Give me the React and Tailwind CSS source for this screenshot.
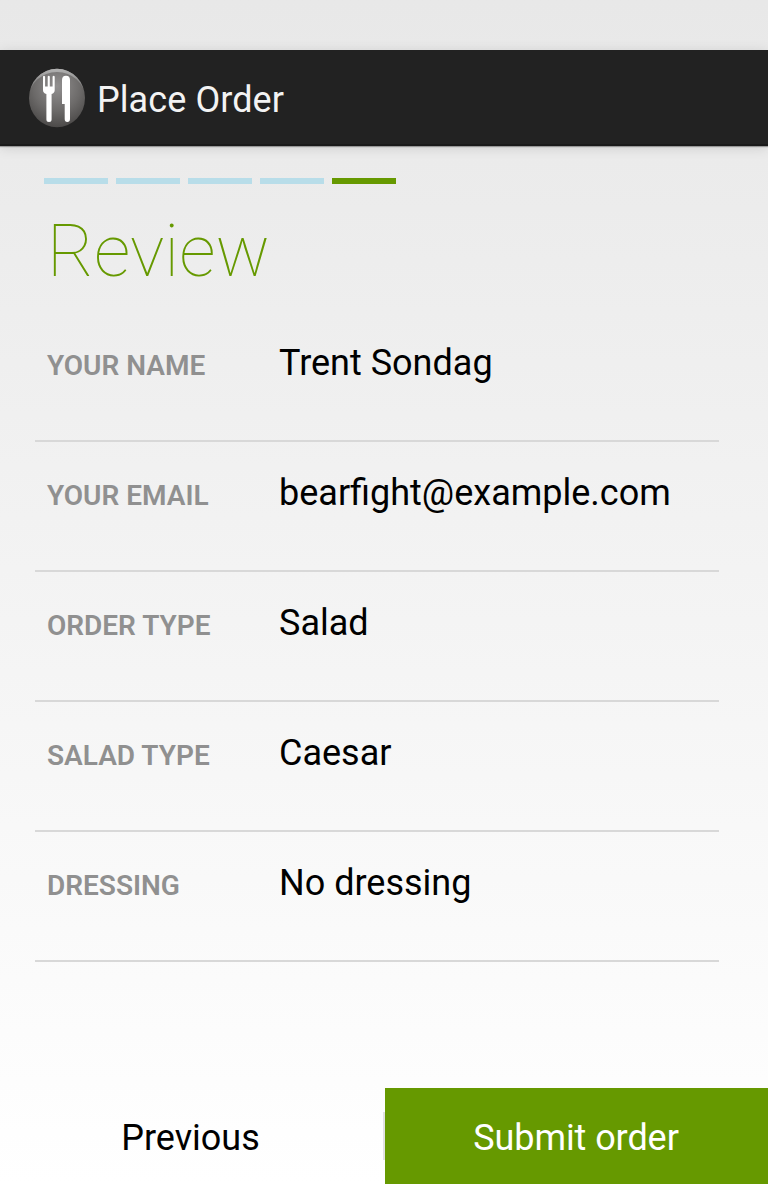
const rows = [
  ["YOUR NAME", "Trent Sondag"],
  ["YOUR EMAIL", "bearfight@example.com"],
  ["ORDER TYPE", "Salad"],
  ["SALAD TYPE", "Caesar"],
  ["DRESSING", "No dressing"],
];

function DiningIcon() {
  return (
    <svg className="mt-0.5 h-[60px] w-[60px]" viewBox="0 0 60 60">
      <defs>
        <radialGradient id="disc" cx="0.5" cy="0.3" r="0.7">
          <stop offset="0" stopColor="#929090" />
          <stop offset="0.6" stopColor="#6c6a69" />
          <stop offset="1" stopColor="#4c4a49" />
        </radialGradient>
        <linearGradient id="rim" x1="0" y1="0" x2="0" y2="1">
          <stop offset="0" stopColor="#b4b4b4" />
          <stop offset="0.5" stopColor="#949494" stopOpacity="0.7" />
          <stop offset="0.8" stopColor="#777" stopOpacity="0" />
        </linearGradient>
      </defs>
      <ellipse cx="30" cy="30" rx="28" ry="29.300" fill="url(#disc)" />
      <path d="M2 30A28 29.300 0 0 1 58 30A28 26 0 0 0 2 30Z" fill="url(#rim)" />
      <path d="M16 8.500Q17 7 18.100 8.500V18.500H20.700V8.500Q21.800 7 22.800 8.500V18.500H25.600V8.500Q26.700 7 27.700 8.500V22Q27.700 25 24.600 26V51.500Q24.600 54 22 54Q19.400 54 19.400 51.500V26Q16 25 16 22Z" fill="#fff" />
      <path d="M35 12Q35 7.700 39 7.700Q43 7.700 43 12V51Q43 54 40.300 54Q37.700 54 37.700 51V36H35Z" fill="#fff" />
    </svg>
  );
}

export default function App() {
  return (
    <div className="flex h-[1184px] w-[768px] flex-col bg-linear-to-b from-[#e8e8e8] to-white pt-[50px] font-[Roboto,sans-serif] text-[36px] leading-[42px] text-black">
      <header className="flex h-24 shrink-0 items-center gap-2.5 border-b-2 border-[#1a1a1a] bg-[#222] pl-[27px] text-[#f3f3f3] shadow-[0_1px_1px_rgba(0,0,0,0.3),0_2px_12px_rgba(0,0,0,0.12)]">
        <DiningIcon />
        <h1 className="pt-1.5 tracking-[0.08px]">Place Order</h1>
      </header>
      <div className="mt-8 ml-11 flex h-1.5 shrink-0 gap-2">
        <i className="w-16 bg-[#b8dde9]" /><i className="w-16 bg-[#b8dde9]" /><i className="w-16 bg-[#b8dde9]" /><i className="w-16 bg-[#b8dde9]" /><i className="w-16 bg-[#690]" />
      </div>
      <h2 className="mt-[26px] ml-[47px] h-[84px] text-[72px] leading-[84px] font-thin text-[#690]">Review</h2>
      <main className="mt-[18px] mr-[49px] ml-[35px]">
        {rows.map(([k, v]) => (
          <div key={k} className="flex h-[130px] border-b-2 border-[#d8d8d8] pt-[30px] pl-3">
            <div className="w-[232px] pt-[3px] text-[28px] font-semibold text-[#909090]">{k}</div>
            <div>{v}</div>
          </div>
        ))}
      </main>
      <footer className="mt-auto flex h-24 text-center leading-[96px]">
        <button className="w-[383px] pt-0.5 pr-0.5">Previous</button>
        <div className="my-6 w-0.5 bg-[#e2e2e2]" />
        <button className="flex-1 bg-[#690] pt-0.5 pr-px tracking-[-0.08px] text-white">Submit order</button>
      </footer>
    </div>
  );
}
